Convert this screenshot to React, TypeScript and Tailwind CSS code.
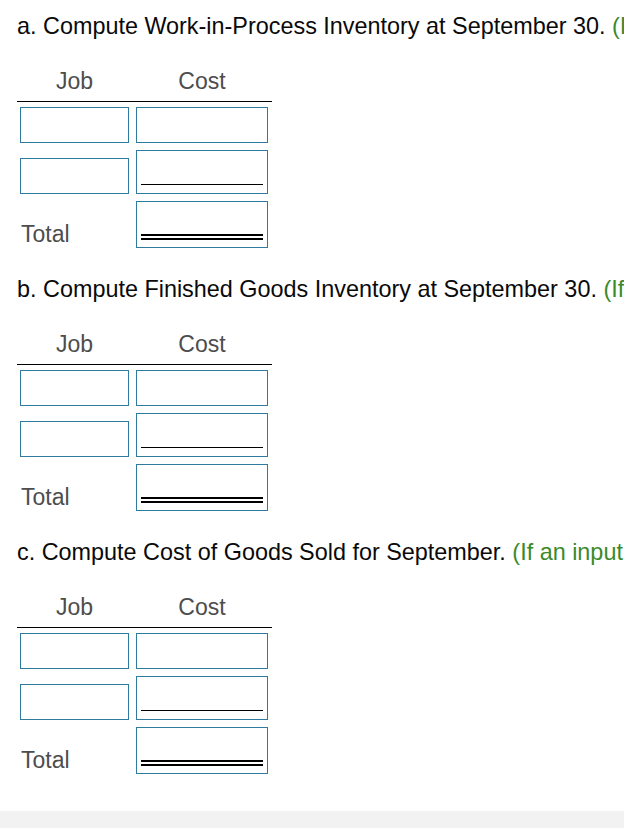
import React from "react";

// Three "Job / Cost" worksheet tables, one per sub-question.

const HINT =
  "(If an input field is not used in the table leave the input field empty; do not select a label or enter a zero.)";

const SECTIONS = [
  { key: "a", title: "a. Compute Work-in-Process Inventory at September 30." },
  { key: "b", title: "b. Compute Finished Goods Inventory at September 30." },
  { key: "c", title: "c. Compute Cost of Goods Sold for September." },
];

function JobInput() {
  return (
    <input
      type="text"
      aria-label="Job"
      className="block h-[36px] w-[109px] border border-[#2e7b9f] bg-white px-1 outline-none"
    />
  );
}

// Cost input; `rule` draws the single or double underline used by worksheets
function CostInput({ rule }: { rule?: "single" | "double" }) {
  const height = rule === "double" ? "h-[47px]" : rule === "single" ? "h-[44px]" : "h-[36px]";
  return (
    <div className={`flex ${height} w-[132px] flex-col border border-[#2e7b9f] bg-white`}>
      <input type="text" aria-label="Cost" className="min-h-0 w-full flex-1 bg-transparent px-1 outline-none" />
      {rule === "single" && <div className="mx-[4px] mb-[8px] h-px bg-black" />}
      {rule === "double" && <div className="mx-[4px] mb-[7px] h-[6px] border-y-2 border-black" />}
    </div>
  );
}

function Section({ title }: { title: string }) {
  return (
    <section className="pt-[13px]">
      <h2 className="whitespace-nowrap pl-[17px] text-[23.4px] leading-[26px] text-[#0a0a0a]">
        {title} <span className="text-[#3b8a2a]">{HINT}</span>
      </h2>

      <div className="ml-[17px] mt-[29px] w-[255px]">
        {/* header */}
        <div className="flex border-b border-black pb-[7px] pl-[3px] text-[23px] leading-[26px] text-[#4d4d4d]">
          <div className="w-[109px] text-center">Job</div>
          <div className="ml-[7px] w-[132px] text-center">Cost</div>
        </div>

        <div className="mt-[5px] flex flex-col gap-[7px] pl-[3px]">
          <div className="flex items-end gap-[7px]">
            <JobInput />
            <CostInput />
          </div>
          <div className="flex items-end gap-[7px]">
            <JobInput />
            <CostInput rule="single" />
          </div>
          <div className="flex items-end gap-[7px]">
            <div className="w-[109px] pb-px pl-px text-[23px] leading-[26px] text-[#4d4d4d]">Total</div>
            <CostInput rule="double" />
          </div>
        </div>
      </div>
    </section>
  );
}

export default function App() {
  return (
    <div className="flex min-h-[828px] w-[624px] flex-col overflow-hidden bg-white font-['Liberation_Sans',Arial,sans-serif]">
      <div className="flex flex-col gap-[15px]">
        {SECTIONS.map((s) => (
          <Section key={s.key} title={s.title} />
        ))}
      </div>
      <div className="mt-auto h-[17px] bg-[#f2f2f2]" />
    </div>
  );
}
